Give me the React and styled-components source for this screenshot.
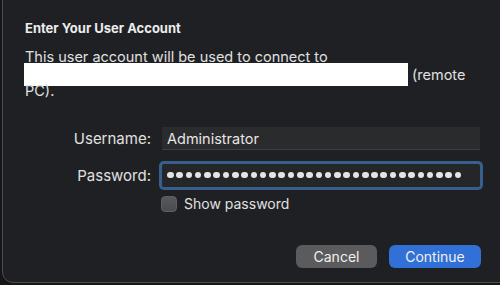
import React from "react";
import styled, { createGlobalStyle } from "styled-components";

const Global = createGlobalStyle`
  html, body {
    margin: 0;
    padding: 0;
    background: #161616;
    overflow: hidden;
  }
  #root {
    width: 500px;
    height: 285px;
  }
`;

const Page = styled.div`
  width: 500px;
  height: 285px;
  display: flex;
  align-items: flex-end;
  padding: 0 0 2px 2px;
  box-sizing: border-box;
  overflow: hidden;
  font-family: Inter, "Liberation Sans", Arial, sans-serif;
`;

const Dialog = styled.div`
  flex: none;
  width: 520px;
  height: 300px;
  box-sizing: border-box;
  background: #1f2023;
  border: 1px solid #4b4c4f;
  border-radius: 11px;
  padding: 35px 0 0 22px;
  display: flex;
  flex-direction: column;
  color: #e2e2e2;
`;

const Title = styled.div`
  font-size: 13px;
  font-weight: 700;
  color: #ececec;
  line-height: 18px;
`;

const Message = styled.div`
  margin-top: 11px;
  font-size: 14.5px;
  line-height: 17px;
  color: #e0e0e0;
`;

const Line = styled.div`
  display: flex;
  align-items: center;
  gap: 4px;
  margin-top: ${(p) => p.$pull || 0}px;
`;

const Redacted = styled.span`
  display: inline-block;
  width: 384px;
  height: 23px;
  background: #ffffff;
  margin-left: -1px;
`;

const Form = styled.div`
  margin-top: 28px;
  display: grid;
  grid-template-columns: 126px 318px;
  column-gap: 11px;
  row-gap: 14px;
  align-items: center;
`;

const Label = styled.label`
  font-size: 15px;
  text-align: right;
  color: #e0e0e0;
`;

const Field = styled.div`
  height: 23px;
  box-sizing: border-box;
  background: ${(p) => (p.$focused ? "#252628" : "#2a2b2d")};
  border-bottom: 1px solid ${(p) => (p.$focused ? "#252628" : "#3e3f42")};
  box-shadow: ${(p) => (p.$focused ? "0 0 0 3px #375f8e" : "none")};
  border-radius: ${(p) => (p.$focused ? "2px" : "0")};
  display: flex;
  align-items: center;
  padding: 0 0 0 5px;
  font-size: 14.5px;
  color: #e6e6e6;
`;

const Dots = styled.div`
  display: flex;
  gap: 2.7px;
`;

const Dot = styled.span`
  width: 6.6px;
  height: 6.6px;
  border-radius: 50%;
  background: #e4e4e4;
`;

const CheckRow = styled.div`
  grid-column: 2;
  display: flex;
  align-items: center;
  gap: 7px;
  margin-top: -6px;
  margin-left: -1px;
  font-size: 14px;
  color: #e0e0e0;
`;

const Box = styled.span`
  width: 16px;
  height: 16px;
  box-sizing: border-box;
  border-radius: 4px;
  background: linear-gradient(#58595c, #4a4b4e);
  border: 1px solid #5e5f62;
`;

const Actions = styled.div`
  margin-top: 33px;
  width: 456px;
  display: flex;
  justify-content: flex-end;
  gap: 12px;
`;

const Button = styled.button`
  height: 23px;
  width: ${(p) => p.$w}px;
  border: none;
  border-radius: 6px;
  font-family: inherit;
  font-size: 14px;
  color: #f0f0f0;
  padding: 0;
  background: ${(p) => (p.$primary ? "#3170d6" : "#5b5b5d")};
`;

export default function App() {
  return (
    <>
      <Global />
      <Page>
        <Dialog>
          <Title>Enter Your User Account</Title>
          <Message>
            <Line>This user account will be used to connect to</Line>
            <Line $pull={-2}>
              <Redacted />
              (remote
            </Line>
            <Line $pull={-4}>PC).</Line>
          </Message>
          <Form>
            <Label>Username:</Label>
            <Field>Administrator</Field>
            <Label>Password:</Label>
            <Field $focused>
              <Dots>
                {Array.from({ length: 32 }).map((_, i) => (
                  <Dot key={i} />
                ))}
              </Dots>
            </Field>
            <CheckRow>
              <Box />
              Show password
            </CheckRow>
          </Form>
          <Actions>
            <Button $w={81}>Cancel</Button>
            <Button $w={92} $primary>
              Continue
            </Button>
          </Actions>
        </Dialog>
      </Page>
    </>
  );
}
